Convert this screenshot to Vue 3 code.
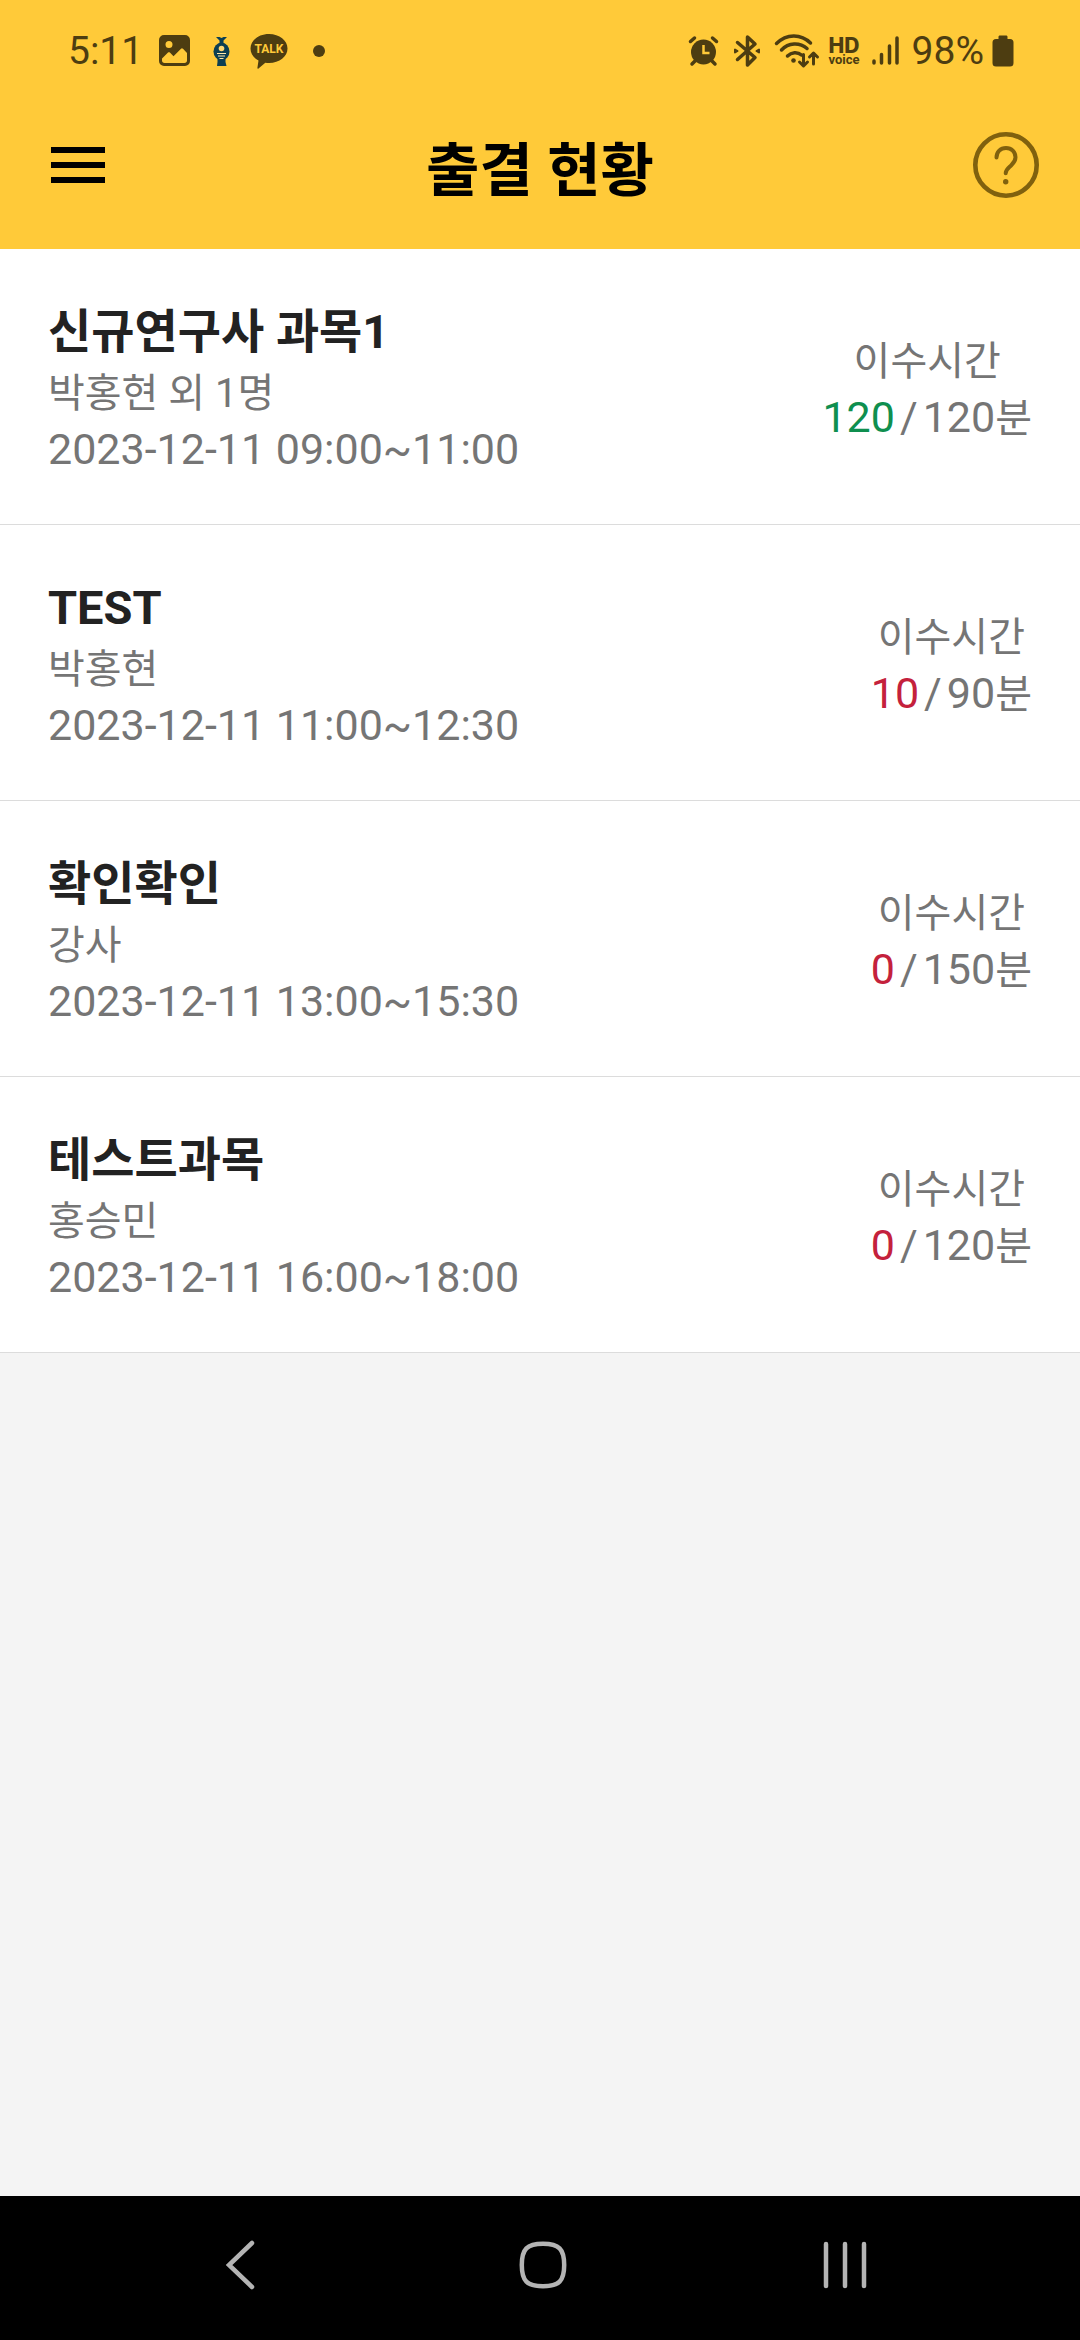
<script setup>
const courses = [
  { title: '신규연구사 과목1', teacher: '박홍현 외 1명', time: '2023-12-11 09:00~11:00', done: 120, total: 120 },
  { title: 'TEST', teacher: '박홍현', time: '2023-12-11 11:00~12:30', done: 10, total: 90 },
  { title: '확인확인', teacher: '강사', time: '2023-12-11 13:00~15:30', done: 0, total: 150 },
  { title: '테스트과목', teacher: '홍승민', time: '2023-12-11 16:00~18:00', done: 0, total: 120 },
]
</script>

<template>
  <div class="screen" lang="ko">
    <header class="top">
      <div class="status">
        <div class="status-group left">
          <span class="clock">5:11</span>
          <svg width="32" height="36" viewBox="0 0 32 36">
            <path fill="currentColor" fill-rule="evenodd" d="M5 2h21a5 5 0 0 1 5 5v21a5 5 0 0 1-5 5H5a5 5 0 0 1-5-5V7a5 5 0 0 1 5-5ZM10 8a3.500 3.500 0 1 0 0 7 3.500 3.500 0 0 0 0-7ZM3 27.500C3 29 4 30 5.500 30h20c1.500 0 2.500-1 2.500-2.500V20l-4-4.300c-.7-.7-1.400-.7-2 0l-7.500 7.500-3.600-3.600c-.6-.6-1.300-.6-1.900 0L3 25.500Z" />
          </svg>
          <svg width="28" height="36" viewBox="0 0 28 36">
            <g fill="#0d3f52">
              <path d="M9 4h3.500l2 1 2-1H20l-3.500 3.500V11h-4V7.500Z" />
              <ellipse cx="14.500" cy="18.500" rx="8" ry="9" />
              <path d="M10.500 25h8v4l1 4h-9.500l.5-4Z" />
            </g>
            <circle cx="14.500" cy="15.500" r="2.800" fill="#ffd873" />
            <path d="M10 20.500h9M11 23h7M12.500 25.500h4" stroke="#ffe9ac" stroke-width="1.200" />
          </svg>
          <svg width="36" height="36" viewBox="0 0 36 36">
            <path fill="currentColor" d="M18 1c10.500 0 18.500 6.500 18.500 14.500S28.500 30 18 30c-1.300 0-2.500-.1-3.700-.3L7.500 35.500c-.6.500-1.200.2-1.100-.6L7.500 27.500C2.500 25-.5 20.500-.5 15.500-.5 7.500 7.500 1 18 1Z" />
            <text class="talk" x="18" y="20" text-anchor="middle">TALK</text>
          </svg>
          <svg width="32" height="36" viewBox="0 0 32 36"><circle cx="16" cy="18" r="6" fill="currentColor" /></svg>
        </div>
        <div class="status-group right">
          <svg width="36" height="36" viewBox="0 0 36 36" fill="none" stroke="currentColor" stroke-linecap="round">
            <circle cx="17.500" cy="19" r="12.500" fill="currentColor" stroke="none" />
            <path d="M4.500 8.500 8.500 5M30.500 8.500 26.500 5" stroke-width="3.500" />
            <path d="M9 28l-3 3M26 28l3 3" stroke-width="3.500" />
            <path d="M17.500 12v8h6" stroke="#ffca39" stroke-width="2.500" stroke-linecap="butt" />
          </svg>
          <svg width="36" height="36" viewBox="0 0 36 36" fill="none" stroke="currentColor" stroke-width="3.500" stroke-linecap="round" stroke-linejoin="round">
            <path d="M7.500 9.500 25 24.500l-7.500 7.500v-28l7.500 7L7.500 26.500" />
            <path d="M5 16.500v3l2.500-1.500ZM29 16.500v3L26.500 18Z" stroke-width="2" fill="currentColor" />
          </svg>
          <svg width="44" height="36" viewBox="0 0 44 36" fill="none" stroke="currentColor" stroke-linecap="round" stroke-linejoin="round">
            <path d="M2.500 10.500C12.500.5 27 .5 36.500 10M7.500 17c7-7.500 18-8 25.500-1.500M13.500 23c4-4 10-4.500 14-1" stroke-width="3.500" />
            <circle cx="19.500" cy="27.500" r="2.300" fill="currentColor" stroke="none" />
            <path d="M29.500 21.500v11M25.500 29l4 4 4-4M39.500 31V20.500M35.500 24l4-4 4 4" stroke-width="3" />
          </svg>
          <svg width="36" height="36" viewBox="0 0 36 36">
            <text text-anchor="middle" fill="currentColor"><tspan class="hd" x="18" y="20">HD</tspan><tspan class="voice" x="18" y="31">voice</tspan></text>
          </svg>
          <svg width="34" height="36" viewBox="0 0 34 36" fill="none" stroke="currentColor" stroke-width="3.500" stroke-linecap="round">
            <path d="M4 28v2M11.500 21.500V30M19.500 13v17M27 5v25" />
          </svg>
          <span>98%</span>
          <svg width="22" height="36" viewBox="0 0 22 36">
            <path fill="currentColor" d="M8 2.500h6c1 0 1.500.5 1.500 1.500v2H18a3.500 3.500 0 0 1 3.500 3.500V30a3.500 3.500 0 0 1-3.500 3.500H4A3.500 3.500 0 0 1 .5 30V9.500A3.500 3.500 0 0 1 4 6h2.500V4c0-1 .5-1.500 1.500-1.500Z" />
          </svg>
        </div>
      </div>
      <div class="appbar">
        <button class="menu" type="button" aria-label="메뉴"><i></i><i></i><i></i></button>
        <h1>출결 현황</h1>
        <button class="help" type="button" aria-label="도움말">
          <svg width="66" height="66" viewBox="0 0 66 66" fill="none" stroke="currentColor" stroke-linecap="round">
            <circle cx="33" cy="33" r="30.700" stroke-width="4.600" />
            <path d="M23.500 25.500c0-5.500 4-9.500 9.500-9.500s9.500 4 9.500 9.300c0 3.300-1.500 5.400-4.200 7.900-3.200 3-5.600 4.300-5.600 8" stroke-width="4" />
            <circle cx="32.700" cy="49.700" r="2.700" fill="currentColor" stroke="none" />
          </svg>
        </button>
      </div>
    </header>

    <main>
      <ul class="list">
        <li v-for="c in courses" :key="c.title" class="row">
          <div class="info">
            <h2>{{ c.title }}</h2>
            <p class="teacher">{{ c.teacher }}</p>
            <p class="date">{{ c.time }}</p>
          </div>
          <div class="credit">
            <p class="label">이수시간</p>
            <p class="value">
              <span :class="c.done >= c.total ? 'done' : 'short'">{{ c.done }}</span>
              <span>/</span>
              <span>{{ c.total }}<span class="unit">분</span></span>
            </p>
          </div>
        </li>
      </ul>
    </main>

    <nav class="keys">
      <button type="button" aria-label="뒤로">
        <svg width="48" height="56" viewBox="0 0 48 56"><path d="M35 6 12 28l23 22" /></svg>
      </button>
      <button type="button" aria-label="홈">
        <svg width="48" height="56" viewBox="0 0 48 56"><path d="M24 6.800c16 0 21.200 5.200 21.200 21.200S40 49.200 24 49.200 2.800 44 2.800 28 8 6.800 24 6.800Z" /></svg>
      </button>
      <button type="button" aria-label="최근 앱">
        <svg width="48" height="56" viewBox="0 0 48 56"><path d="M5 7v42M24 7v42M43 7v42" /></svg>
      </button>
    </nav>
  </div>
</template>

<style>
body {
  margin: 0;
}
</style>

<style scoped>
.screen {
  display: flex;
  flex-direction: column;
  min-height: 100vh;
  background: #f4f4f4;
  color: #757575;
  font-family: Roboto, "Noto Sans CJK KR", sans-serif;
}
h1, h2, p, ul {
  margin: 0;
  padding: 0;
}
button {
  padding: 0;
  border: 0;
  background: none;
}
svg {
  display: block;
  flex: none;
  overflow: visible;
}
.top {
  background: #ffca39;
  padding-bottom: 21px;
}
.status {
  display: flex;
  justify-content: space-between;
  align-items: center;
  height: 102px;
  padding: 0 66px 0 68px;
  color: #4d3d11;
  font-size: 39px;
}
.status-group {
  display: flex;
  align-items: center;
}
.left {
  gap: 16px;
}
.right {
  gap: 8px;
}
.talk {
  font: 700 12px Roboto, sans-serif;
  fill: #ffca39;
}
.hd {
  font: 800 21px Inter, sans-serif;
}
.voice {
  font: 700 13px Roboto, sans-serif;
}
.appbar {
  display: grid;
  grid-template-columns: 1fr auto 1fr;
  align-items: center;
  height: 126px;
  padding: 0 41px;
}
.menu {
  display: flex;
  flex-direction: column;
  gap: 9px;
  width: 74px;
  padding: 10px;
}
.menu i {
  height: 6px;
  width: 54px;
  background: #000;
}
h1 {
  padding-top: 12px;
  color: #000;
  font-size: 58px;
  line-height: 80px;
  font-weight: 700;
}
.help {
  justify-self: end;
  color: #80610e;
}
.list {
  list-style: none;
}
.row {
  display: flex;
  justify-content: space-between;
  align-items: center;
  padding: 52px 48px 47px;
  border-bottom: 1px solid #dcdcdc;
  background: #fff;
}
h2 {
  margin-bottom: 3px;
  color: #222;
  font-size: 47px;
  line-height: 61px;
  font-weight: 700;
}
.teacher,
.label {
  font-size: 40px;
  line-height: 57px;
}
.date,
.value {
  font-size: 43px;
  line-height: 55px;
}
.credit {
  text-align: center;
}
.value {
  display: flex;
  gap: 5px;
}
.unit {
  font-size: 40px;
}
.done {
  color: #0f8f4f;
}
.short {
  color: #c4213c;
}
.keys {
  display: grid;
  grid-template-columns: repeat(3, 1fr);
  place-items: center;
  height: 138px;
  margin-top: auto;
  padding: 0 84px 6px 90px;
  background: #000;
}
.keys svg {
  fill: none;
  stroke: #b4b4b4;
  stroke-width: 4.500;
  stroke-linecap: round;
}
</style>
